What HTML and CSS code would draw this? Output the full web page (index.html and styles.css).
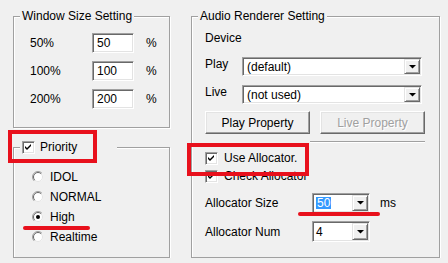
FILE: index.html
```html
<!DOCTYPE html>
<html lang="en">
<head>
    <meta charset="UTF-8">
    <title>Renderer Settings</title>
    <link rel="stylesheet" href="styles.css">
</head>
<body>
    <div class="dialog">
        <div class="col-left">
            <!-- Window size -->
            <div class="group size-group">
                <span class="group-title">Window Size Setting</span>
                <div class="size-row"><span class="size-label">50%</span><span class="edit">50</span><span class="unit">%</span></div>
                <div class="size-row"><span class="size-label">100%</span><span class="edit">100</span><span class="unit">%</span></div>
                <div class="size-row"><span class="size-label">200%</span><span class="edit">200</span><span class="unit">%</span></div>
            </div>

            <!-- Priority -->
            <div class="group priority-group">
                <span class="group-title check-title"><span class="checkbox"><svg width="13" height="13" viewBox="0 0 13 13"><path d="M3 5L5 7L9 3V5L5 9L3 7Z" fill="#000"/></svg></span>Priority</span>
                <ul class="radio-list">
                    <li><svg class="radio" viewBox="0 0 12 12"><circle cx="6" cy="6" r="5" fill="#fff"/><path d="M2.1 9.9A5.5 5.5 0 0 1 9.9 2.1" fill="none" stroke="#a0a0a0"/><path d="M2.8 9.2A4.5 4.5 0 0 1 9.2 2.8" fill="none" stroke="#696969"/><path d="M9.2 2.8A4.5 4.5 0 0 1 2.8 9.2" fill="none" stroke="#e3e3e3"/></svg>IDOL</li>
                    <li><svg class="radio" viewBox="0 0 12 12"><circle cx="6" cy="6" r="5" fill="#fff"/><path d="M2.1 9.9A5.5 5.5 0 0 1 9.9 2.1" fill="none" stroke="#a0a0a0"/><path d="M2.8 9.2A4.5 4.5 0 0 1 9.2 2.8" fill="none" stroke="#696969"/><path d="M9.2 2.8A4.5 4.5 0 0 1 2.8 9.2" fill="none" stroke="#e3e3e3"/></svg>NORMAL</li>
                    <li><svg class="radio" viewBox="0 0 12 12"><circle cx="6" cy="6" r="5" fill="#fff"/><path d="M2.1 9.9A5.5 5.5 0 0 1 9.9 2.1" fill="none" stroke="#a0a0a0"/><path d="M2.8 9.2A4.5 4.5 0 0 1 9.2 2.8" fill="none" stroke="#696969"/><path d="M9.2 2.8A4.5 4.5 0 0 1 2.8 9.2" fill="none" stroke="#e3e3e3"/><circle cx="6" cy="6" r="2" fill="#000"/></svg>High</li>
                    <li><svg class="radio" viewBox="0 0 12 12"><circle cx="6" cy="6" r="5" fill="#fff"/><path d="M2.1 9.9A5.5 5.5 0 0 1 9.9 2.1" fill="none" stroke="#a0a0a0"/><path d="M2.8 9.2A4.5 4.5 0 0 1 9.2 2.8" fill="none" stroke="#696969"/><path d="M9.2 2.8A4.5 4.5 0 0 1 2.8 9.2" fill="none" stroke="#e3e3e3"/></svg>Realtime</li>
                </ul>
            </div>
        </div>

        <!-- Audio renderer -->
        <div class="group audio-group">
            <span class="group-title">Audio Renderer Setting</span>
            <div class="device-label">Device</div>

            <div class="field-row play-row">
                <span class="field-label">Play</span>
                <div class="combo combo-wide">
                    <span class="combo-text">(default)</span>
                    <span class="combo-btn"><svg width="7" height="4" viewBox="0 0 7 4"><path d="M0 0H7L3.5 3.5Z" fill="#000"/></svg></span>
                </div>
            </div>
            <div class="field-row">
                <span class="field-label">Live</span>
                <div class="combo combo-wide">
                    <span class="combo-text">(not used)</span>
                    <span class="combo-btn"><svg width="7" height="4" viewBox="0 0 7 4"><path d="M0 0H7L3.5 3.5Z" fill="#000"/></svg></span>
                </div>
            </div>

            <div class="btn-row">
                <button class="btn">Play Property</button>
                <button class="btn" disabled>Live Property</button>
            </div>
            <div class="separator"></div>

            <div class="check-row first-check">
                <span class="checkbox"><svg width="13" height="13" viewBox="0 0 13 13"><path d="M3 5L5 7L9 3V5L5 9L3 7Z" fill="#000"/></svg></span>Use Allocator.
            </div>
            <div class="check-row">
                <span class="checkbox"><svg width="13" height="13" viewBox="0 0 13 13"><path d="M3 5L5 7L9 3V5L5 9L3 7Z" fill="#000"/></svg></span>Check Allocator
            </div>

            <div class="field-row alloc-row">
                <span class="alloc-label">Allocator Size</span>
                <div class="combo combo-small">
                    <span class="combo-text"><span class="sel">50</span></span>
                    <span class="combo-btn"><svg width="7" height="4" viewBox="0 0 7 4"><path d="M0 0H7L3.5 3.5Z" fill="#000"/></svg></span>
                </div>
                <span class="ms">ms</span>
            </div>
            <div class="field-row alloc-row">
                <span class="alloc-label">Allocator Num</span>
                <div class="combo combo-small num">
                    <span class="combo-text">4</span>
                    <span class="combo-btn"><svg width="7" height="4" viewBox="0 0 7 4"><path d="M0 0H7L3.5 3.5Z" fill="#000"/></svg></span>
                </div>
            </div>
        </div>
    </div>

    <!-- red annotations -->
    <div class="mark-box mark-priority"></div>
    <div class="mark-box mark-alloc"></div>
    <div class="mark-line line-high"></div>
    <div class="mark-line line-size"></div>
</body>
</html>
```

FILE: styles.css
```css
body {
    margin: 0;
    background: #f0f0f0;
    font-family: "Liberation Sans", Arial, sans-serif;
    font-size: 12px;
    color: #000;
}

.dialog {
    display: flex;
    align-items: flex-start;
    gap: 21px;
    padding: 16px 0 0 13px;
}

.col-left {
    width: 157px;
    display: flex;
    flex-direction: column;
    gap: 19px;
}

.group {
    position: relative;
    box-sizing: border-box;
    border: 1px solid #a0a0a0;
    box-shadow: 1px 1px 0 #fff, inset 1px 1px 0 #fff;
}

.group-title {
    position: absolute;
    top: -8px;
    left: 6px;
    padding: 0 2px;
    line-height: 14px;
    background: #f0f0f0;
    display: flex;
    align-items: center;
    gap: 5px;
    white-space: nowrap;
}

.check-title {
    padding-right: 40px;
}

/* window size */
.size-group {
    height: 112px;
    padding: 16px 0 0 16px;
    display: flex;
    flex-direction: column;
    gap: 8px;
}

.size-row {
    display: flex;
    align-items: center;
    height: 20px;
}

.size-label {
    width: 62px;
}

.edit {
    box-sizing: border-box;
    width: 42px;
    height: 20px;
    padding: 0 4px;
    line-height: 18px;
    background: #fff;
    border: 1px solid;
    border-color: #a0a0a0 #fff #fff #a0a0a0;
    box-shadow: inset 1px 1px 0 #696969, inset -1px -1px 0 #e3e3e3;
}

.unit {
    margin-left: 12px;
}

/* priority */
.priority-group {
    height: 111px;
    padding: 19px 0 0 18px;
}

.radio-list {
    list-style: none;
    margin: 0;
    padding: 0;
}

.radio-list li {
    height: 20px;
    display: flex;
    align-items: center;
}

.radio {
    width: 12px;
    height: 12px;
    margin-right: 6px;
}

.checkbox {
    width: 13px;
    height: 13px;
    flex: none;
    box-sizing: border-box;
    background: #fff;
    border: 1px solid;
    border-color: #a0a0a0 #fff #fff #a0a0a0;
    box-shadow: inset 1px 1px 0 #696969, inset -1px -1px 0 #e3e3e3;
    position: relative;
}

.checkbox svg {
    position: absolute;
    left: -1px;
    top: -1px;
}

/* audio renderer */
.audio-group {
    width: 249px;
    height: 242px;
    padding: 14px 0 0 13px;
}

.device-label {
    line-height: 14px;
    margin-bottom: 12px;
}

.field-row {
    display: flex;
    align-items: center;
}

.play-row {
    margin-bottom: 9px;
}

.field-label {
    width: 37px;
    margin-top: -6px;
}

.combo {
    box-sizing: border-box;
    display: flex;
    background: #fff;
    border: 1px solid;
    border-color: #a0a0a0 #fff #fff #a0a0a0;
    box-shadow: inset 1px 1px 0 #696969, inset -1px -1px 0 #e3e3e3;
}

.combo-wide {
    width: 180px;
    height: 19px;
}

.combo-small {
    width: 58px;
    height: 20px;
}

.combo-small.num {
    height: 21px;
}

.combo-text {
    flex: 1;
    padding-left: 4px;
    display: flex;
    align-items: center;
}

.combo-small .combo-text {
    padding-left: 3px;
}

.combo-btn {
    box-sizing: border-box;
    width: 16px;
    margin: 1px;
    display: flex;
    align-items: center;
    justify-content: center;
    background: #f0f0f0;
    border: 1px solid;
    border-color: #e3e3e3 #696969 #696969 #e3e3e3;
    box-shadow: inset 1px 1px 0 #fff, inset -1px -1px 0 #a0a0a0;
}

.sel {
    background: #3399ff;
    color: #fff;
    padding: 0 1px;
    line-height: 12px;
}

.btn-row {
    display: flex;
    gap: 10px;
    margin-top: 7px;
}

.btn {
    box-sizing: border-box;
    width: 105px;
    height: 23px;
    padding: 0;
    font-family: inherit;
    font-size: 12px;
    color: #000;
    background: #f0f0f0;
    border: 1px solid;
    border-color: #fff #696969 #696969 #fff;
    box-shadow: inset -1px -1px 0 #a0a0a0, inset 1px 1px 0 #e3e3e3;
}

.btn:disabled {
    color: #a0a0a0;
    text-shadow: 1px 1px 0 #fff;
}

.separator {
    width: 115px;
    height: 1px;
    margin: 7px 0 0 105px;
    background: #a0a0a0;
    box-shadow: 0 1px 0 #fff;
}

.check-row {
    height: 18px;
    display: flex;
    align-items: center;
    gap: 6px;
}

.first-check {
    margin-top: 7px;
}

.alloc-row {
    margin-top: 8px;
}

.alloc-label {
    width: 107px;
}

.ms {
    margin-left: 10px;
}

/* red annotations */
.mark-box {
    position: absolute;
    box-sizing: border-box;
    border: 4px solid #e8101c;
}

.mark-priority {
    left: 8px;
    top: 130px;
    width: 89px;
    height: 33px;
}

.mark-alloc {
    left: 187px;
    top: 143px;
    width: 122px;
    height: 33px;
}

.mark-line {
    position: absolute;
    height: 4px;
    border-radius: 2px;
    background: #e8101c;
}

.line-high {
    left: 23px;
    top: 226px;
    width: 67px;
}

.line-size {
    left: 298px;
    top: 212px;
    width: 82px;
}
```
